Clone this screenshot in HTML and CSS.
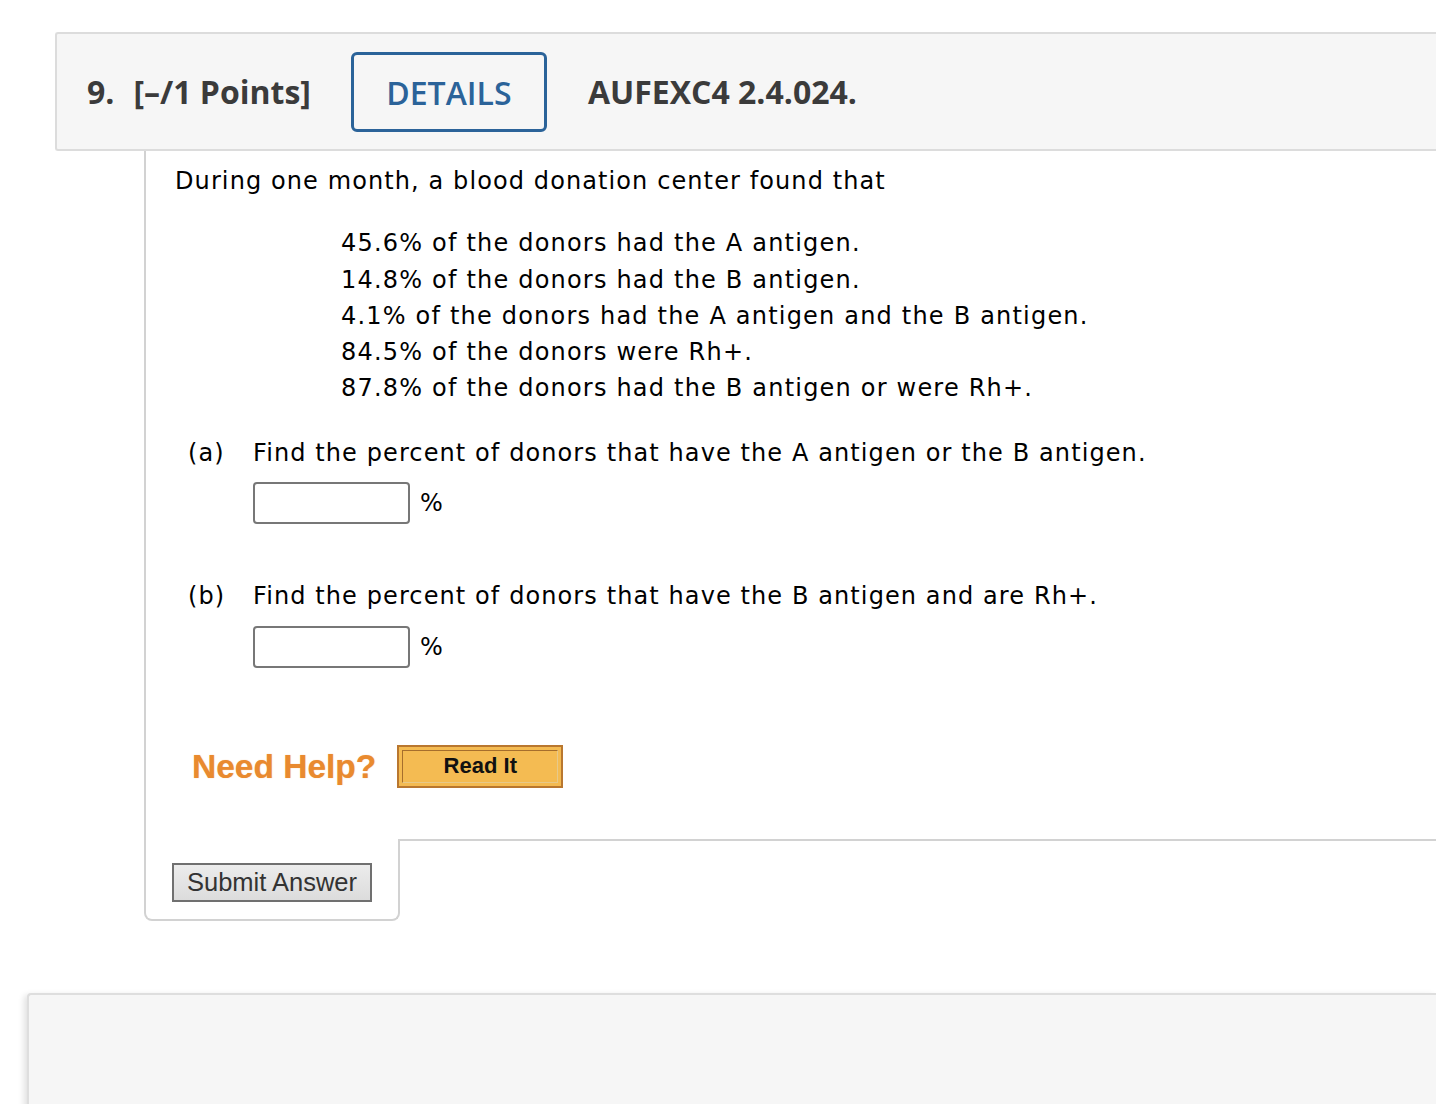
FILE: index.html
```html
<!DOCTYPE html>
<html>
<head>
<meta charset="utf-8">
<link rel="stylesheet" href="styles.css">
</head>
<body>
<div class="qhead">
  <span class="qnum">9.</span>
  <span class="qpts">[–/1 Points]</span>
  <span class="details">DETAILS</span>
  <span class="qcode">AUFEXC4 2.4.024.</span>
</div>
<div class="qbody">
  <p class="intro">During one month, a blood donation center found that</p>
  <div class="facts">
    <div>45.6% of the donors had the A antigen.</div>
    <div>14.8% of the donors had the B antigen.</div>
    <div>4.1% of the donors had the A antigen and the B antigen.</div>
    <div>84.5% of the donors were Rh+.</div>
    <div>87.8% of the donors had the B antigen or were Rh+.</div>
  </div>
  <div class="part">
    <div class="prow"><span class="plabel">(a)</span><span>Find the percent of donors that have the A antigen or the B antigen.</span></div>
    <div class="arow"><span class="ans"></span><span class="pct">%</span></div>
  </div>
  <div class="part partb">
    <div class="prow"><span class="plabel">(b)</span><span>Find the percent of donors that have the B antigen and are Rh+.</span></div>
    <div class="arow"><span class="ans"></span><span class="pct">%</span></div>
  </div>
  <div class="help">
    <span class="needhelp">Need Help?</span>
    <span class="readit"><span class="readit-in">Read It</span></span>
  </div>
</div>
<div class="qfoot">
  <div class="submitbox"><span class="submit">Submit Answer</span></div>
  <div class="footrest"></div>
</div>
<div class="nextq"></div>
</body>
</html>
```
FILE: styles.css
```css
html, body {
  margin: 0;
  padding: 0;
  background: #fff;
  overflow: hidden;
}
body {
  font-family: "DejaVu Sans", Verdana, sans-serif;
  color: #000;
}
.qhead {
  margin: 32px 0 0 55px;
  height: 115px;
  border: 2px solid #dcdcdc;
  border-right: none;
  border-radius: 3px 0 0 3px;
  background: #f6f6f6;
  display: flex;
  align-items: center;
  padding-left: 30px;
  font-family: "Open Sans", sans-serif;
  font-weight: 700;
  font-size: 32px;
  color: #3b3b3b;
}
.qnum { margin-right: 19px; }
.details {
  margin-left: 40px;
  width: 190px;
  height: 74px;
  box-sizing: content-box;
  border: 3px solid #2b6399;
  border-radius: 6px;
  display: flex;
  align-items: center;
  justify-content: center;
  color: #2b6399;
  font-weight: 600;
  margin-top: 1px;
}
.qcode { margin-left: 41px; }
.qbody {
  margin-left: 144px;
  border-left: 2px solid #d2d2d2;
  padding: 12px 0 51px 29px;
  font-size: 24px;
  line-height: 36.25px;
  letter-spacing: 1.1px;
}
.intro { margin: 0; }
.facts {
  margin: 26px 0 0 166px;
  letter-spacing: 1.2px;
}
.part {
  margin-top: 28px;
  padding-left: 13px;
}
.partb { margin-top: 54px; }
.prow { display: flex; }
.plabel { width: 65px; flex: none; }
.arow {
  display: flex;
  align-items: center;
  margin: 11px 0 0 65px;
}
.partb .arow { margin-top: 12px; }
.ans {
  width: 153px;
  height: 38px;
  border: 2px solid #777;
  border-radius: 4px;
  background: #fff;
}
.pct { margin-left: 10px; }
.help {
  margin-top: 77px;
  padding-left: 17px;
  display: flex;
  align-items: center;
  letter-spacing: 0;
}
.needhelp {
  font-family: "Liberation Sans", Arial, sans-serif;
  font-weight: 700;
  font-size: 33.5px;
  line-height: 40px;
  color: #e98a2f;
  text-shadow: 0 0 1px rgba(233,138,47,0.6);
}
.readit {
  margin-left: 21px;
  border: 2px solid #b9772f;
  background: #f4bb52;
  display: flex;
  padding: 3px;
  box-sizing: content-box;
  width: 156px;
  height: 33px;
}
.readit-in {
  flex: 1;
  border: 1px solid #a66e2c;
  border-right-color: #e7c98a;
  border-bottom-color: #e7c98a;
  display: flex;
  align-items: center;
  justify-content: center;
  font-family: "Liberation Sans", Arial, sans-serif;
  font-weight: 700;
  font-size: 22px;
  color: #111;
}
.qfoot {
  display: flex;
  margin-left: 144px;
}
.submitbox {
  width: 226px;
  border: 2px solid #d2d2d2;
  border-top: none;
  border-radius: 0 0 8px 8px;
  padding: 24px 0 17px 26px;
  box-sizing: content-box;
}
.submit {
  display: inline-flex;
  align-items: center;
  justify-content: center;
  width: 196px;
  height: 35px;
  border: 2px solid #707070;
  background: linear-gradient(#ececec, #dcdcdc);
  font-family: "Liberation Sans", Arial, sans-serif;
  font-size: 25.5px;
  color: #333;
}
.footrest {
  flex: 1;
  border-top: 2px solid #d2d2d2;
  margin-left: -2px;
}
.nextq {
  margin: 72px 0 0 27px;
  height: 200px;
  border: 2px solid #dedede;
  border-right: none;
  border-radius: 4px 0 0 0;
  background: #f6f6f6;
  box-shadow: -3px 2px 6px rgba(0,0,0,0.12);
}
```
